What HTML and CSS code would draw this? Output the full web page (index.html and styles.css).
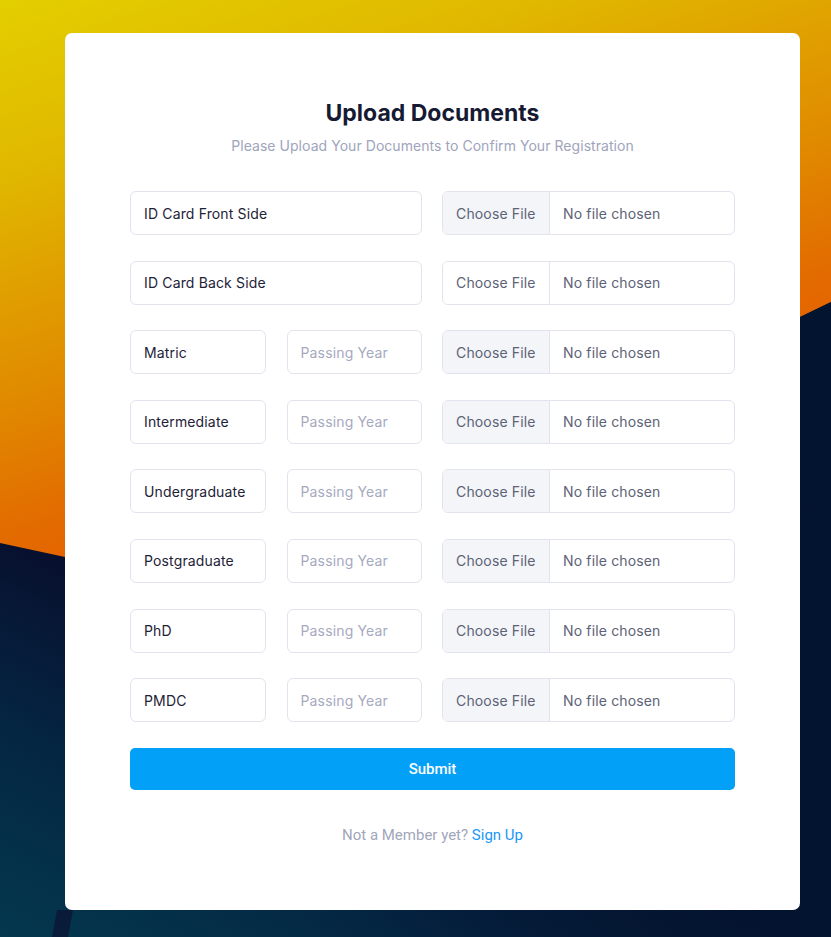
FILE: index.html
```html
<!DOCTYPE html>
<html lang="en">
<head>
<meta charset="utf-8">
<title>Upload Documents</title>
<link rel="stylesheet" href="styles.css">
</head>
<body>
<svg class="backdrop" viewBox="0 0 831 937" preserveAspectRatio="none" aria-hidden="true">
  <defs>
    <linearGradient id="warm" gradientUnits="userSpaceOnUse" x1="0" y1="0" x2="170" y2="530">
      <stop offset="0" stop-color="#e3cf00"/>
      <stop offset="0.3" stop-color="#e0b800"/>
      <stop offset="0.5" stop-color="#e0a000"/>
      <stop offset="0.7" stop-color="#e08900"/>
      <stop offset="0.9" stop-color="#e26d00"/>
      <stop offset="1" stop-color="#e56400"/>
    </linearGradient>
    <linearGradient id="deep" gradientUnits="userSpaceOnUse" x1="0" y1="937" x2="160" y2="620">
      <stop offset="0" stop-color="#04384f"/>
      <stop offset="0.5" stop-color="#042744"/>
      <stop offset="1" stop-color="#07112f"/>
    </linearGradient>
    <linearGradient id="deepShade" gradientUnits="userSpaceOnUse" x1="300" y1="0" x2="831" y2="0">
      <stop offset="0" stop-color="#021530" stop-opacity="0"/>
      <stop offset="1" stop-color="#021530" stop-opacity="0.8"/>
    </linearGradient>
  </defs>
  <rect x="0" y="0" width="831" height="937" fill="url(#warm)"/>
  <polygon points="0,543 65,557 800,317 831,302 831,937 0,937" fill="url(#deep)"/>
  <polygon points="65,557 800,317 831,302 831,937 65,937" fill="url(#deepShade)"/>
  <polygon points="57,910 73,910 68,937 52,937" fill="#0a1836" opacity="0.85"/>
</svg>

<main class="card">
  <h1 class="title">Upload Documents</h1>
  <p class="subtitle">Please Upload Your Documents to Confirm Your Registration</p>

  <form class="form">
    <div class="row">
      <div class="field"><span class="value">ID Card Front Side</span></div>
      <div class="file"><span class="file-btn">Choose File</span><span class="file-name">No file chosen</span></div>
    </div>
    <div class="row">
      <div class="field"><span class="value">ID Card Back Side</span></div>
      <div class="file file-plain"><span class="file-btn">Choose File</span><span class="file-name">No file chosen</span></div>
    </div>
    <div class="row">
      <div class="pair">
        <div class="field"><span class="value">Matric</span></div>
        <div class="field"><span class="placeholder">Passing Year</span></div>
      </div>
      <div class="file"><span class="file-btn">Choose File</span><span class="file-name">No file chosen</span></div>
    </div>
    <div class="row">
      <div class="pair">
        <div class="field"><span class="value">Intermediate</span></div>
        <div class="field"><span class="placeholder">Passing Year</span></div>
      </div>
      <div class="file"><span class="file-btn">Choose File</span><span class="file-name">No file chosen</span></div>
    </div>
    <div class="row">
      <div class="pair">
        <div class="field"><span class="value">Undergraduate</span></div>
        <div class="field"><span class="placeholder">Passing Year</span></div>
      </div>
      <div class="file"><span class="file-btn">Choose File</span><span class="file-name">No file chosen</span></div>
    </div>
    <div class="row">
      <div class="pair">
        <div class="field"><span class="value">Postgraduate</span></div>
        <div class="field"><span class="placeholder">Passing Year</span></div>
      </div>
      <div class="file"><span class="file-btn">Choose File</span><span class="file-name">No file chosen</span></div>
    </div>
    <div class="row">
      <div class="pair">
        <div class="field"><span class="value">PhD</span></div>
        <div class="field"><span class="placeholder">Passing Year</span></div>
      </div>
      <div class="file"><span class="file-btn">Choose File</span><span class="file-name">No file chosen</span></div>
    </div>
    <div class="row">
      <div class="pair">
        <div class="field"><span class="value">PMDC</span></div>
        <div class="field"><span class="placeholder">Passing Year</span></div>
      </div>
      <div class="file"><span class="file-btn">Choose File</span><span class="file-name">No file chosen</span></div>
    </div>

    <button type="button" class="submit">Submit</button>
  </form>

  <p class="footer">Not a Member yet? <a class="signup" href="#">Sign Up</a></p>
</main>
</body>
</html>
```

FILE: styles.css
```css
* {
  box-sizing: border-box;
}

html, body {
  margin: 0;
  height: 100%;
}

body {
  font-family: Inter, "Noto Sans", "Liberation Sans", sans-serif;
  padding: 33px 31px 27px 65px;
  overflow: hidden;
}

.backdrop {
  position: fixed;
  inset: 0;
  width: 100%;
  height: 100%;
  z-index: -1;
  display: block;
}

.card {
  width: 735px;
  height: 877px;
  background: #ffffff;
  border-radius: 7px;
  padding: 67px 65px 0 65px;
  display: flex;
  flex-direction: column;
  align-items: stretch;
}

.title {
  margin: 0;
  text-align: center;
  font-size: 23px;
  line-height: 26px;
  font-weight: 700;
  color: #161a33;
}

.subtitle {
  margin: 10px 0 0;
  text-align: center;
  font-size: 14px;
  line-height: 20px;
  color: #a0a4bc;
  letter-spacing: 0.05px;
}

.form {
  margin-top: 35px;
  display: flex;
  flex-direction: column;
  gap: 25.6px;
}

.row {
  display: grid;
  grid-template-columns: 292px 1fr;
  column-gap: 20px;
  height: 44px;
}

.pair {
  display: grid;
  grid-template-columns: 1fr 1fr;
  column-gap: 21px;
}

.field {
  border: 1px solid #e3e3ef;
  border-radius: 6px;
  display: flex;
  align-items: center;
  padding: 0 13px;
  font-size: 14px;
  letter-spacing: 0.15px;
  background: #fff;
}

.value {
  color: #1e2237;
}

.placeholder {
  color: #a6aabf;
}

.file {
  border: 1px solid #e3e3ef;
  border-radius: 6px;
  display: flex;
  align-items: stretch;
  overflow: hidden;
  font-size: 14px;
  letter-spacing: 0.15px;
  color: #5d6276;
}

.file-btn {
  width: 107px;
  flex: none;
  background: #f3f5f9;
  border-right: 1px solid #e3e3ef;
  display: flex;
  align-items: center;
  padding-left: 13px;
}

.file-plain .file-btn {
  background: #ffffff;
}

.file-name {
  display: flex;
  align-items: center;
  padding-left: 13px;
}

.submit {
  margin-top: 0.4px;
  height: 42px;
  border: none;
  border-radius: 5px;
  background: #03a0f8;
  color: #ffffff;
  font-family: Roboto, "Liberation Sans", sans-serif;
  font-weight: 500;
  font-size: 15px;
  cursor: pointer;
}

.footer {
  margin: 36px 0 0;
  text-align: center;
  font-family: Roboto, "Liberation Sans", sans-serif;
  font-size: 15px;
  line-height: 18px;
  color: #a2a6bb;
}

.signup {
  color: #1a98f4;
  text-decoration: none;
}
```
